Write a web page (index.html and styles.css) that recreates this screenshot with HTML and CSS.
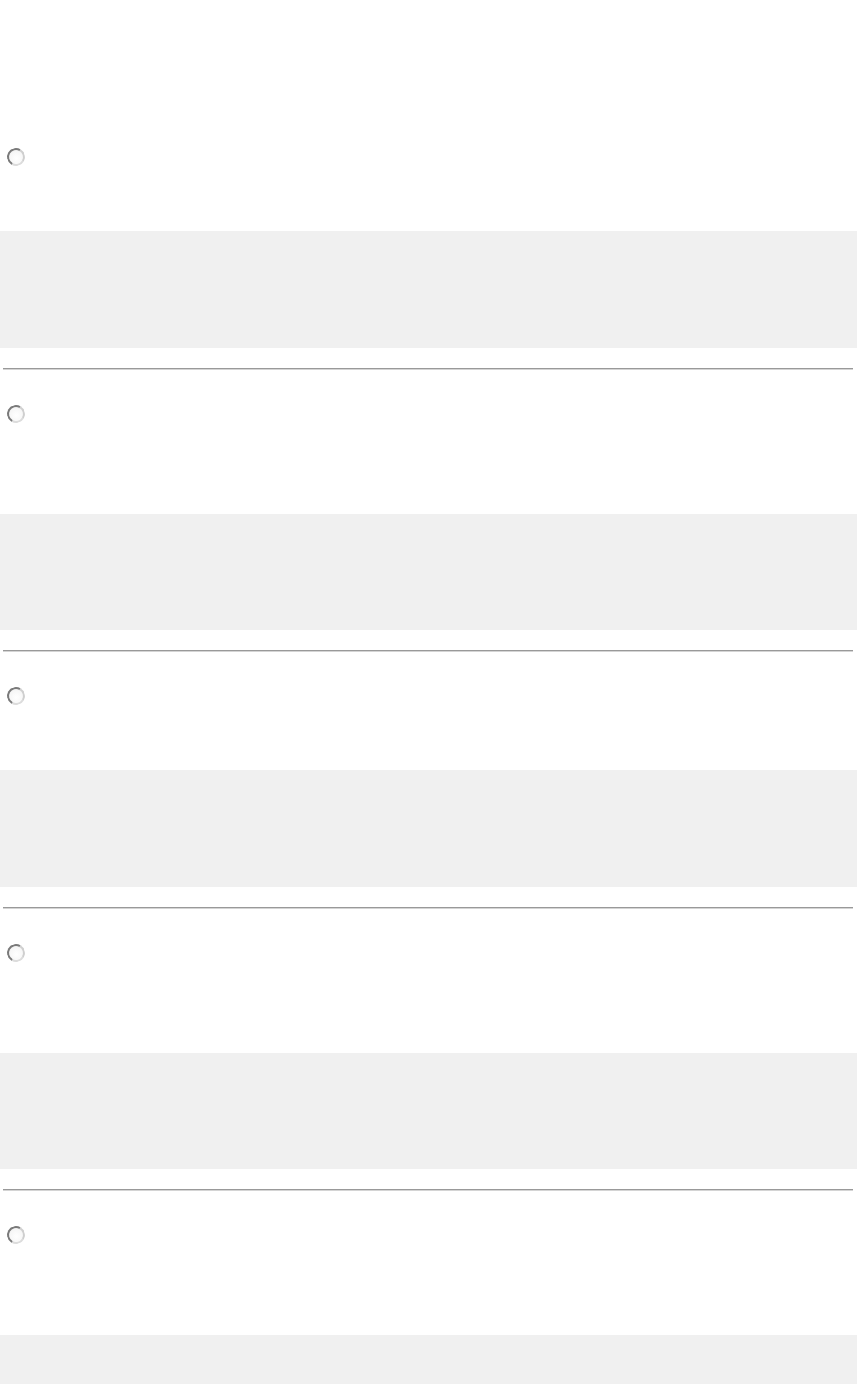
FILE: index.html
```html
<!DOCTYPE html>
<html lang="en">
<head>
<meta charset="utf-8">
<title>Options</title>
<link rel="stylesheet" href="styles.css">
</head>
<body>
<main class="options">
  <section class="option first">
    <label class="choice"><span class="radio"></span></label>
    <div class="panel"></div>
    <hr class="rule">
  </section>
  <section class="option tall">
    <label class="choice"><span class="radio"></span></label>
    <div class="panel"></div>
    <hr class="rule">
  </section>
  <section class="option">
    <label class="choice"><span class="radio"></span></label>
    <div class="panel"></div>
    <hr class="rule">
  </section>
  <section class="option tall">
    <label class="choice"><span class="radio"></span></label>
    <div class="panel"></div>
    <hr class="rule">
  </section>
  <section class="option tall">
    <label class="choice"><span class="radio"></span></label>
    <div class="panel"></div>
  </section>
</main>
</body>
</html>
```

FILE: styles.css
```css
html, body {
  margin: 0;
  padding: 0;
  background: #ffffff;
  font-family: "Liberation Sans", Arial, sans-serif;
}

.options {
  display: flex;
  flex-direction: column;
  padding-top: 148px;
}

.option {
  display: flex;
  flex-direction: column;
}

.option + .option {
  padding-top: 36px;
}

.choice {
  display: flex;
  align-items: center;
  height: 18px;
  padding-left: 7px;
}

.radio {
  box-sizing: border-box;
  width: 18px;
  height: 18px;
  border-radius: 50%;
  border: 2.5px solid;
  border-color: #7a7a7a #cfcfcf #dcdcdc #7a7a7a;
  background: radial-gradient(circle at 50% 60%, #ffffff 0%, #f7f7f7 60%, #eaeaea 100%);
  transform: rotate(-15deg);
}

.panel {
  margin-top: 65px;
  height: 116.5px;
  background: #f0f0f0;
}

.tall .panel {
  margin-top: 91px;
}

.rule {
  margin: 20px 4px 0 3px;
  border: 0;
  height: 1px;
  background: #999999;
  box-shadow: 0 1px 0 #d4d4d4;
}
```
